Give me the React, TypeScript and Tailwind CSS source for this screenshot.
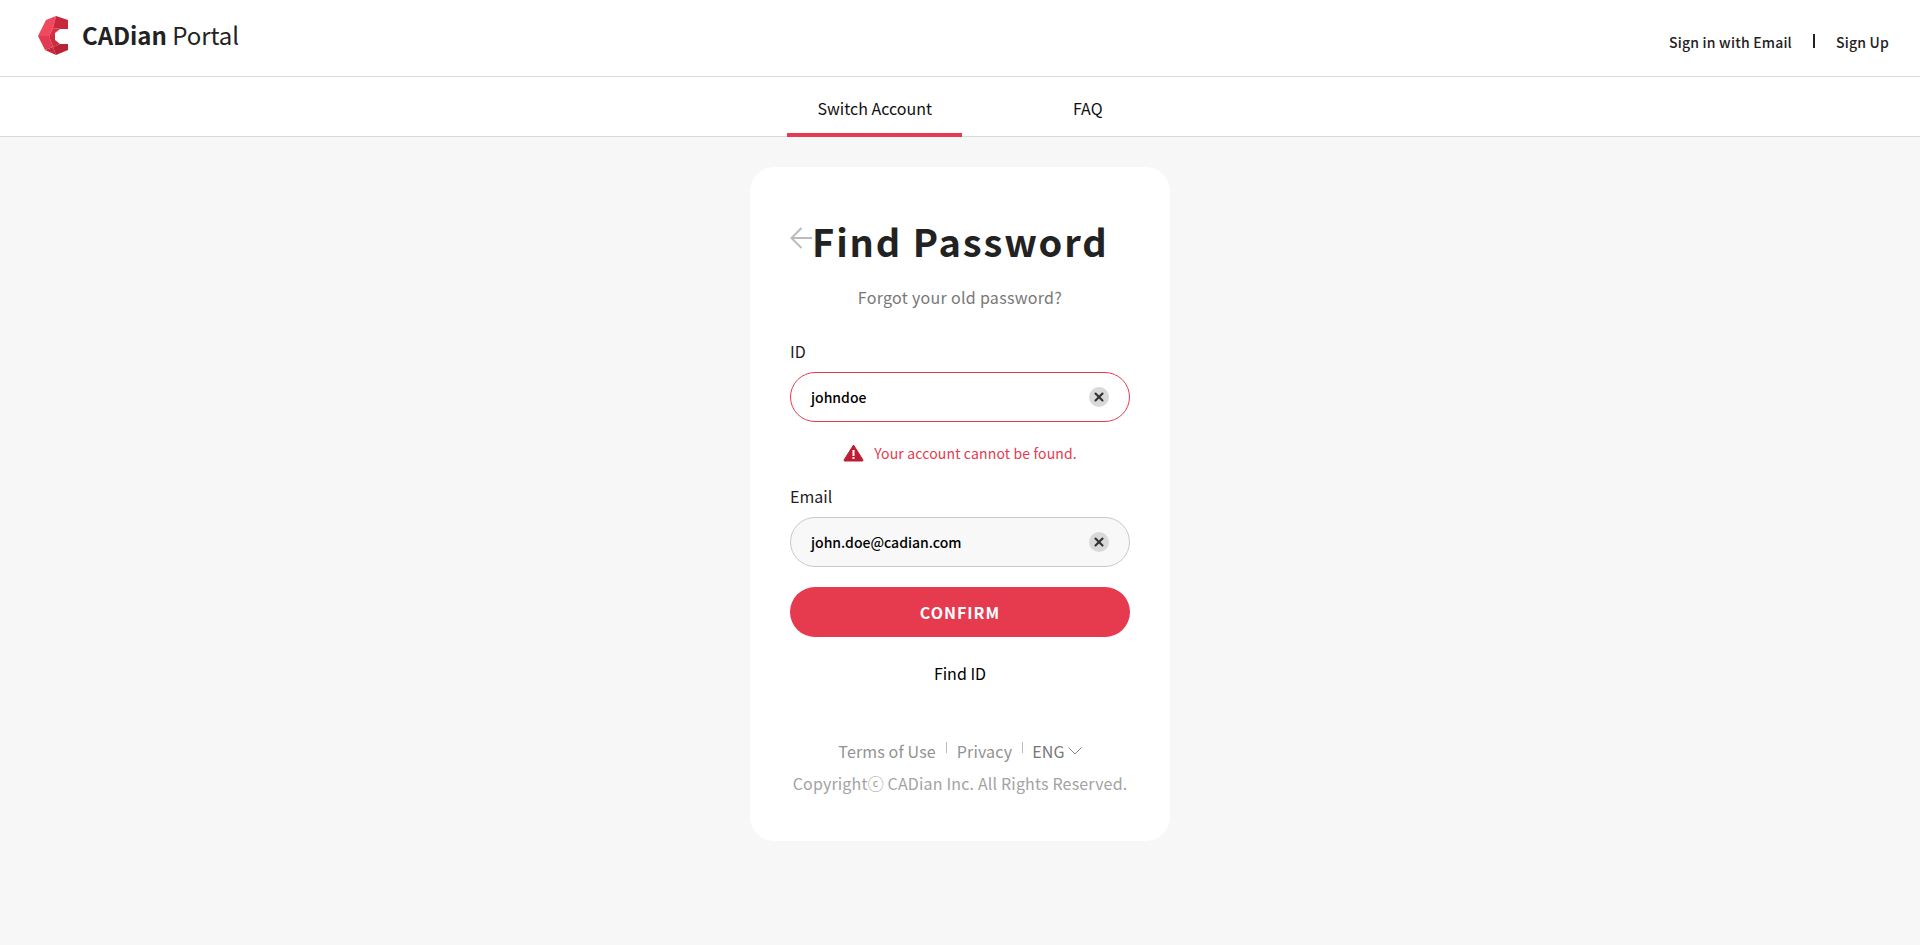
import { X } from 'lucide-react'

const FONT = "font-['Noto_Sans_CJK_KR','Noto_Sans',sans-serif]"

function Logo(): JSX.Element {
  return (
    <svg width="30" height="40" viewBox="0 0 30 40" className="shrink-0">
      <path d="M0 21 L8 5 L18 1 L15 13 L11 21 Z" fill="#f0495e" />
      <path d="M18 1 L30 5 L30 14 L22 14 L15 13 Z" fill="#c9283c" />
      <path d="M15 13 L22 14 L17 18 L17 21 L11 21 Z" fill="#d92f45" />
      <path d="M0 21 L11 21 L15 32 L7 35 Z" fill="#e23a50" />
      <path d="M11 21 L17 21 L17 25 L22 29 L15 32 Z" fill="#cf2b40" />
      <path d="M7 35 L15 32 L18 40 Z" fill="#c9283c" />
      <path d="M15 32 L22 29 L30 29 L30 35 L18 40 Z" fill="#b92235" />
    </svg>
  )
}

function Field({ value, className }: { value: string; className: string }): JSX.Element {
  return (
    <div className={`mt-[9px] flex h-[50px] items-center justify-between rounded-[25px] border pl-5 pr-5 ${className}`}>
      <span className="text-[14px] font-medium text-black">{value}</span>
      <span className="flex h-5 w-5 items-center justify-center rounded-full bg-[#d9d9d9]">
        <X size={14} strokeWidth={3.6} className="text-[#333]" />
      </span>
    </div>
  )
}

export default function App(): JSX.Element {
  return (
    <div className={`flex min-h-[945px] flex-col bg-[#f7f7f7] ${FONT}`}>
      <header className="flex h-[77px] items-start justify-between border-b border-[#d9d9d9] bg-white pl-[38px] pr-[31px]">
        <div className="mt-[15px] flex items-center gap-[14px]">
          <Logo />
          <p className="text-[24px] leading-[40px] tracking-[-0.05px] text-[#222]">
            <span className="font-bold">CADian</span> <span className="font-normal">Portal</span>
          </p>
        </div>
        <div className="mt-[32px] flex items-center text-[14px] font-medium tracking-[0.2px] text-[#222]">
          <span>Sign in with Email</span>
          <span className="mx-[21px] mb-1 h-[14px] w-0.5 bg-[#222]" />
          <span>Sign Up</span>
        </div>
      </header>

      <nav className="flex h-[60px] justify-center gap-[81px] border-b border-[#d9d9d9] bg-white">
        <a className="h-[60px] border-b-4 border-[#e63a4f] px-[30px] pt-[19px] text-[16px] leading-6 text-[#111]">Switch Account</a>
        <a className="h-[60px] px-[30px] pt-[19px] text-[16px] leading-6 text-[#111]">FAQ</a>
      </nav>

      <main className="flex justify-center pt-[30px]">
        <div className="flex h-[674px] w-[420px] flex-col rounded-[24px] bg-white px-10 pt-[49px]">
          <div className="flex items-start">
            <svg width="22" height="22" viewBox="0 0 22 22" fill="none" stroke="#bbb" strokeWidth="2" className="mt-[11px] shrink-0">
              <path d="M11.5 1 L1.5 11 L11.5 21 M1.5 11 H22" />
            </svg>
            <h1 className="text-[38px] leading-[50px] font-bold tracking-[1.9px] whitespace-nowrap text-[#222]">Find Password</h1>
          </div>
          <p className="mt-[19px] text-center text-[16px] leading-6 tracking-[0.3px] text-[#777]">Forgot your old password?</p>

          <label className="mt-[30px] text-[16px] leading-6 text-[#222]">ID</label>
          <Field value="johndoe" className="border-[#e63a4f] bg-white" />
          <div className="mt-[19px] flex items-center justify-center gap-[10px]">
            <svg width="21" height="18" viewBox="0 0 21 18">
              <path d="M10.5 1 L20 16 Q20.4 17 19 17 L2 17 Q0.6 17 1 16 Z" fill="#be1e33" stroke="#be1e33" strokeLinejoin="round" />
              <rect x="9.5" y="6" width="2" height="6" fill="#fff" />
              <rect x="9.5" y="13" width="2" height="2" fill="#fff" />
            </svg>
            <span className="text-[14px] leading-6 tracking-[0.15px] text-[#e63a4f]">Your account cannot be found.</span>
          </div>

          <label className="mt-[19px] text-[16px] leading-6 text-[#222]">Email</label>
          <Field value="john.doe@cadian.com" className="border-[#c9c9c9] bg-[#f8f8f8]" />

          <button className="mt-5 h-[50px] rounded-[25px] bg-[#e63a4f] text-[16px] font-bold tracking-[1px] text-white">CONFIRM</button>
          <a className="mt-[24px] text-center text-[16px] leading-6 text-black">Find ID</a>

          <div className="mt-[54px] flex items-center justify-center text-[16px] leading-6 tracking-[0.15px] text-[#929292]">
            <span>Terms of Use</span>
            <span className="mx-[10px] mb-2 h-[11px] w-px bg-[#bbb]" />
            <span>Privacy</span>
            <span className="ml-[10px] mr-[9px] mb-2 h-[11px] w-px bg-[#bbb]" />
            <span className="text-[#777]">ENG</span>
            <svg width="14" height="8" viewBox="0 0 14 8" fill="none" stroke="#888" strokeWidth="1" className="ml-[3px]">
              <path d="M0.5 0.5 L7 7 L13.5 0.5" />
            </svg>
          </div>
          <p className="mt-[8px] text-center text-[16px] leading-6 tracking-[0.17px] whitespace-nowrap text-[#a3a3a3]">Copyrightⓒ CADian Inc. All Rights Reserved.</p>
        </div>
      </main>
    </div>
  )
}
